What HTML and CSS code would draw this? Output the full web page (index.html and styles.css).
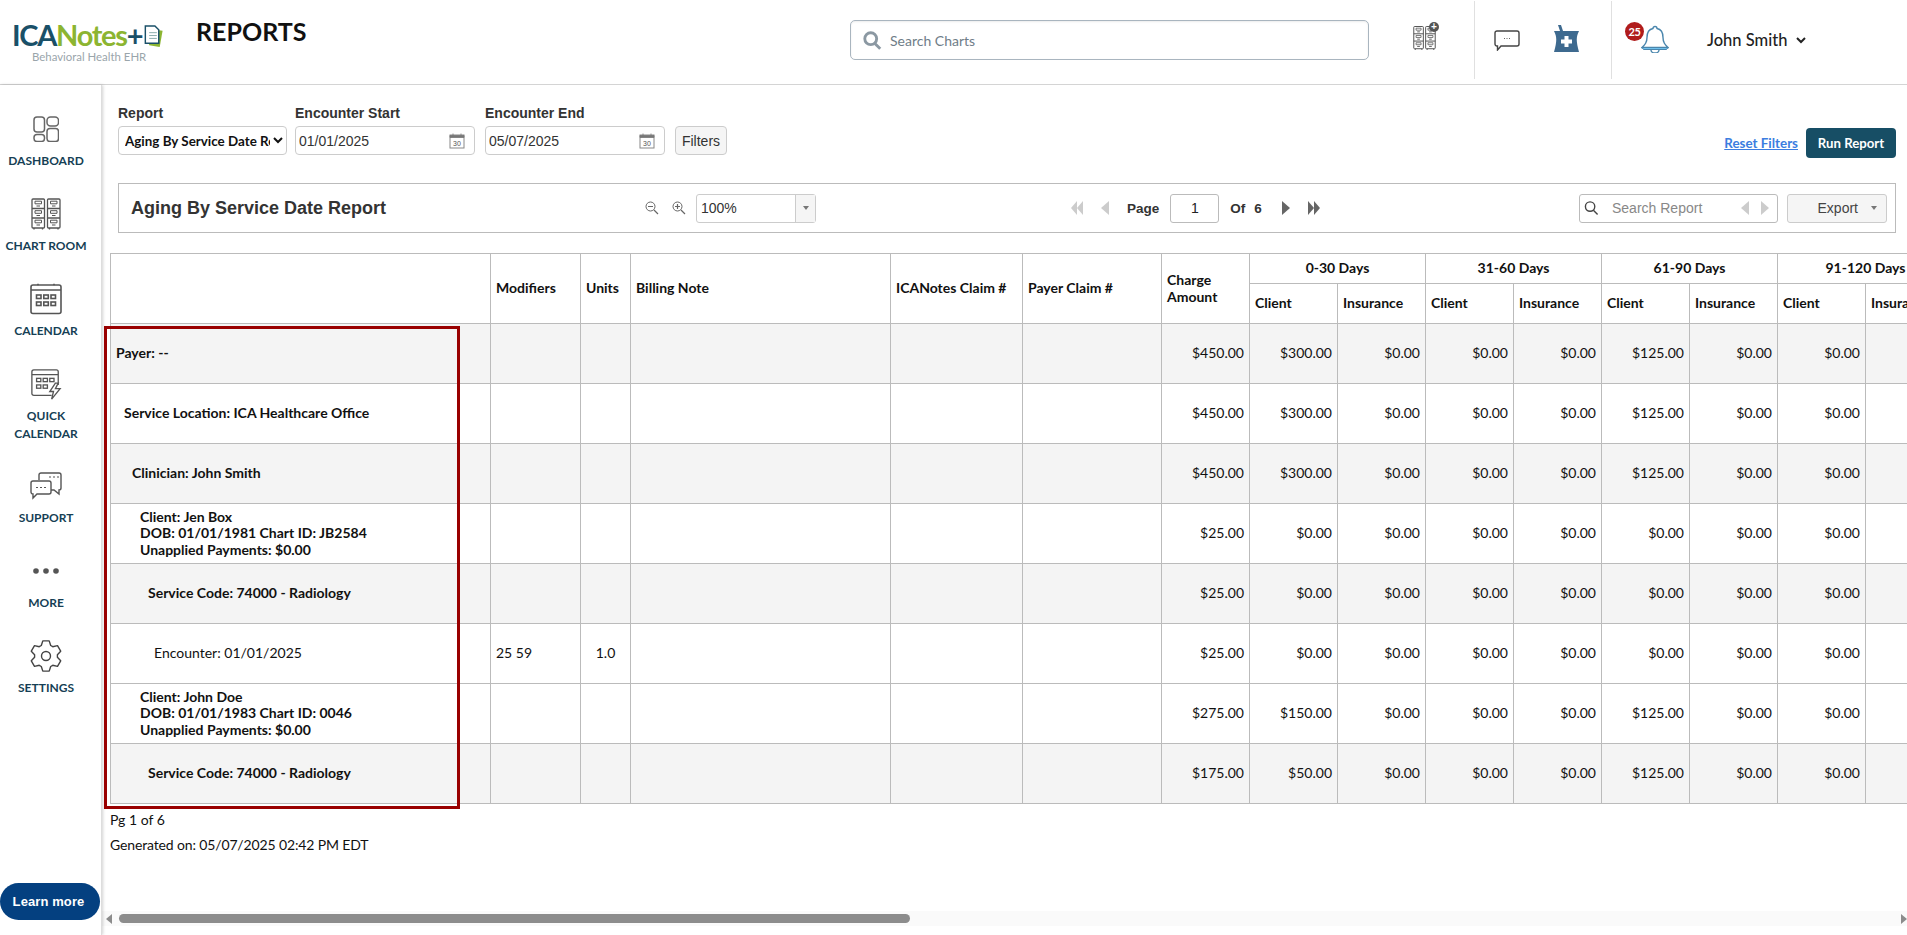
FILE: index.html
```html
<!DOCTYPE html>
<html lang="en">
<head>
<meta charset="utf-8">
<title>ICANotes Reports</title>
<link rel="stylesheet" href="styles.css">
</head>
<body>
<svg class="defs" width="0" height="0" aria-hidden="true">
  <symbol id="cabinet" viewBox="0 0 30 32">
    <g fill="none" stroke="currentColor" stroke-width="1.300">
      <rect x="1" y="1" width="12.500" height="29" rx="1"/><rect x="16.500" y="1" width="12.500" height="29" rx="1"/>
      <path d="M1 10.500h12.500M1 20h12.500M16.500 10.500H29M16.500 20H29M3 30v1.500M11.500 30v1.500M18.500 30v1.500M27 30v1.500"/>
      <path stroke-width="1" d="M4 3.200h6.500v2.600H4zM4 12.700h6.500v2.600H4zM4 22.200h6.500v2.600H4zM19.500 3.200H26v2.600h-6.500zM19.500 12.700H26v2.600h-6.500zM19.500 22.200H26v2.600h-6.500z"/>
      <path stroke-width="1.200" d="M5.500 8h3.500M5.500 17.500h3.500M5.500 27h3.500M21 8h3.500M21 17.500h3.500M21 27h3.500"/>
    </g>
  </symbol>
  <symbol id="cal" viewBox="0 0 32 32">
    <g fill="none" stroke="currentColor" stroke-width="1.600">
      <rect x="1" y="2" width="30" height="28.500" rx="2"/><path d="M1 7h30M8 .8v1.500M24 .8v1.500"/>
      <rect x="6.500" y="12" width="4.500" height="3.500"/><rect x="13.800" y="12" width="4.500" height="3.500"/><rect x="21" y="12" width="4.500" height="3.500"/>
      <rect x="6.500" y="19" width="4.500" height="3.500"/><rect x="13.800" y="19" width="4.500" height="3.500"/><rect x="21" y="19" width="4.500" height="3.500"/>
    </g>
  </symbol>
  <symbol id="mag" viewBox="0 0 16 16">
    <circle cx="6.500" cy="6.500" r="5" fill="none" stroke="currentColor"/>
    <path d="M10 10.500l4.500 4.500" stroke="currentColor" fill="none"/>
  </symbol>
  <symbol id="datecal" viewBox="0 0 16 16">
    <rect x="1" y="2" width="14" height="13" fill="#fff" stroke="#888"/>
    <path d="M1 2.500h14v2H1zM4 .5v3M12 .5v3" fill="#777" stroke="#777" stroke-width=".8"/>
    <text x="8" y="12.500" class="date-glyph">30</text>
  </symbol>
</svg>

<header class="topbar">
  <div class="logo">
    <div class="logo-word"><span class="logo-ica">ICA</span><span class="logo-notes">Notes</span><span class="logo-ica">+</span>
      <svg class="logo-doc" viewBox="0 0 20 24"><path d="M5 4l15 2-3 17-11-2" fill="#8cb531"/><path d="M2 1h10l4 4v14H2z" fill="#fff" stroke="#1a5068" stroke-width="1.500"/><path d="M6 8h8M6 11h8M6 14h8" stroke="#8aa" stroke-width="1"/></svg>
    </div>
    <div class="logo-sub">Behavioral Health EHR</div>
  </div>
  <h1 class="page-title">REPORTS</h1>
  <div class="chart-search">
    <svg class="chart-search-icon"><use href="#mag"/></svg>
    <span>Search Charts</span>
  </div>
  <div class="top-group top-group-charts">
    <div class="cabinet-plus">
      <svg class="cabinet-small"><use href="#cabinet"/></svg>
      <span class="plus-dot">+</span>
    </div>
  </div>
  <div class="top-group top-group-tools">
    <svg class="chat-icon" viewBox="0 0 26 21"><path d="M3 1h20a2 2 0 0 1 2 2v11a2 2 0 0 1-2 2H7l-3.500 4V16H3a2 2 0 0 1-2-2V3a2 2 0 0 1 2-2z" fill="#fff" stroke="#444" stroke-width="1.400"/><path d="M10 8.500h1M12.500 8.500h1M15 8.500h1" stroke="#666" stroke-width="1"/></svg>
    <svg class="mortar-icon" viewBox="0 0 27 28"><path d="M5 0h3l2 6H7z" fill="#3e6a8f"/><path d="M1 6h25c-3 6-3 10 0 21H1c3-11 3-15 0-21z" fill="#3e6a8f"/><path d="M11.500 11h4v3.500H19v4h-3.500V22h-4v-3.500H8v-4h3.500z" fill="#fff"/></svg>
  </div>
  <div class="user-group">
    <div class="bell-wrap">
      <svg class="bell-icon" viewBox="0 0 28 28"><path d="M14 1.500a2 2 0 0 1 2 2c5 1 6 5 6 9 0 5 2 7 5 10H1c3-3 5-5 5-10 0-4 1-8 6-9a2 2 0 0 1 2-2z" fill="#fff" stroke="#4a86ad" stroke-width="1.400"/><path d="M1 22.500h26l-1.500 2h-23z" fill="#6fc0ec" stroke="#4a86ad"/><path d="M10 25a4 3 0 0 0 8 0" fill="none" stroke="#4a86ad" stroke-width="1.400"/></svg>
      <span class="bell-badge">25</span>
    </div>
    <span class="user-name">John Smith</span>
    <svg class="user-caret" viewBox="0 0 10 7"><path d="M1 1l4 4 4-4" fill="none" stroke="#222" stroke-width="2"/></svg>
  </div>
</header>

<div class="shell">
  <nav class="sidebar">
    <a class="nav-item">
      <svg class="nav-icon icon-dash" viewBox="0 0 26 26"><g fill="none" stroke="#666" stroke-width="1.500"><rect x="1" y="1" width="10.500" height="15" rx="3"/><rect x="14" y="1" width="11.500" height="9" rx="3.500"/><rect x="1" y="18.500" width="10.500" height="7" rx="3"/><rect x="14" y="12.500" width="11.500" height="13" rx="3"/></g></svg>
      <span>DASHBOARD</span>
    </a>
    <a class="nav-item">
      <svg class="nav-icon icon-chart"><use href="#cabinet"/></svg>
      <span>CHART ROOM</span>
    </a>
    <a class="nav-item">
      <svg class="nav-icon icon-chart"><use href="#cal"/></svg>
      <span>CALENDAR</span>
    </a>
    <a class="nav-item">
      <svg class="nav-icon icon-chart" viewBox="0 0 32 34"><g fill="none" stroke="#555" stroke-width="1.400"><path d="M22 29H3a2 2 0 0 1-2-2V4a2 2 0 0 1 2-2h24a2 2 0 0 1 2 2v14M1 7h28"/><rect x="6" y="11" width="4.500" height="3.500"/><rect x="13" y="11" width="4.500" height="3.500"/><rect x="20" y="11" width="4.500" height="3.500"/><rect x="6" y="18" width="4.500" height="3.500"/><rect x="13" y="18" width="4.500" height="3.500"/><path d="M26 16l-6 9h4l-2 8 9-11h-5l3-6z" fill="#fff"/></g></svg>
      <span>QUICK<br>CALENDAR</span>
    </a>
    <a class="nav-item">
      <svg class="nav-icon icon-chart" viewBox="0 0 32 28"><g fill="none" stroke="#555" stroke-width="1.400"><path d="M9 8V3a2 2 0 0 1 2-2h18a2 2 0 0 1 2 2v13a2 2 0 0 1-2 2v4l-5-4h-4"/><path d="M3 9h16a2 2 0 0 1 2 2v9a2 2 0 0 1-2 2H7l-4 4v-4a2 2 0 0 1-2-2v-9a2 2 0 0 1 2-2z" fill="#fff"/><path d="M6 15.500h2M10 15.500h2M14 15.500h2M19 5h2M23 5h2M27 5h2" stroke-width="1.200"/></g></svg>
      <span>SUPPORT</span>
    </a>
    <a class="nav-item">
      <svg class="nav-icon icon-more" viewBox="0 0 26 6"><circle cx="3" cy="3" r="2.800" fill="#555"/><circle cx="13" cy="3" r="2.800" fill="#555"/><circle cx="23" cy="3" r="2.800" fill="#555"/></svg>
      <span>MORE</span>
    </a>
    <a class="nav-item">
      <svg class="nav-icon icon-chart" viewBox="0 0 32 32"><g fill="none" stroke="#444" stroke-width="1.400" stroke-linejoin="round"><path d="M11.300 5.500L12.800.84H19.200L20.700 5.500L22.760 6.700L27.500 5.600L30.700 11.200L27.400 14.800V17.200L30.700 20.800L27.500 26.400L22.760 25.300L20.700 26.500L19.200 31.160H12.800L11.300 26.500L9.240 25.300L4.500 26.400L1.300 20.800L4.600 17.200V14.800L1.300 11.200L4.500 5.600L9.240 6.700z"/><circle cx="16" cy="16" r="4.500"/></g></svg>
      <span>SETTINGS</span>
    </a>
    <button class="learn-more">Learn more</button>
  </nav>

  <main class="content">
    <form class="filters">
      <label class="field">
        <span class="field-label">Report</span>
        <select class="report-select"><option>Aging By Service Date Report</option></select>
      </label>
      <label class="field">
        <span class="field-label">Encounter Start</span>
        <span class="date-box"><input class="date-input" value="01/01/2025"><svg class="date-icon"><use href="#datecal"/></svg></span>
      </label>
      <label class="field">
        <span class="field-label">Encounter End</span>
        <span class="date-box"><input class="date-input" value="05/07/2025"><svg class="date-icon"><use href="#datecal"/></svg></span>
      </label>
      <button type="button" class="filters-btn">Filters</button>
      <div class="run-actions">
        <a class="reset-link">Reset Filters</a>
        <button type="button" class="run-btn">Run Report</button>
      </div>
    </form>

    <section class="toolbar">
      <h2 class="report-title">Aging By Service Date Report</h2>
      <div class="zoom-tools">
        <svg class="zoom-icon" viewBox="0 0 14 14"><circle cx="5.500" cy="5.500" r="4.500" fill="none" stroke="#666"/><path d="M3 5.500h5M9 9l4 4" stroke="#666" stroke-width="1.200"/></svg>
        <svg class="zoom-icon" viewBox="0 0 14 14"><circle cx="5.500" cy="5.500" r="4.500" fill="none" stroke="#666"/><path d="M3 5.500h5M5.500 3v5M9 9l4 4" stroke="#666" stroke-width="1.200"/></svg>
        <div class="zoom-combo"><span class="zoom-value">100%</span><span class="zoom-drop"><i class="caret-down"></i></span></div>
      </div>
      <div class="pager">
        <i class="tri-left tri-off"></i><i class="tri-left tri-off"></i>
        <i class="tri-left tri-off tri-prev"></i>
        <span class="pager-label">Page</span>
        <span class="pager-input">1</span>
        <span class="pager-label">Of</span>
        <span class="pager-label pager-count">6</span>
        <i class="tri-right tri-next"></i>
        <i class="tri-right tri-last"></i><i class="tri-right"></i>
      </div>
      <div class="report-search">
        <svg class="report-search-icon"><use href="#mag"/></svg>
        <span class="report-search-text">Search Report</span>
        <i class="tri-left tri-small"></i>
        <i class="tri-right tri-small tri-off-right"></i>
      </div>
      <div class="export-btn"><span>Export</span><i class="caret-down"></i></div>
    </section>

    <section class="report">
      <table class="grid">
        <colgroup>
          <col class="c380"><col class="c90"><col class="c50"><col class="c260"><col class="c132"><col class="c139"><col class="c88">
          <col class="c88"><col class="c88"><col class="c88"><col class="c88"><col class="c88"><col class="c88"><col class="c88"><col class="c88">
        </colgroup>
        <thead>
          <tr class="head-top">
            <th rowspan="2"></th><th rowspan="2">Modifiers</th><th rowspan="2">Units</th><th rowspan="2">Billing Note</th><th rowspan="2">ICANotes Claim #</th><th rowspan="2">Payer Claim #</th><th rowspan="2">Charge Amount</th>
            <th colspan="2" class="band">0-30 Days</th><th colspan="2" class="band">31-60 Days</th><th colspan="2" class="band">61-90 Days</th><th colspan="2" class="band">91-120 Days</th>
          </tr>
          <tr class="head-sub">
            <th>Client</th><th>Insurance</th><th>Client</th><th>Insurance</th><th>Client</th><th>Insurance</th><th>Client</th><th>Insurance</th>
          </tr>
        </thead>
        <tbody>
          <tr class="shade"><td class="lbl lv0">Payer: --</td><td></td><td></td><td></td><td></td><td></td><td class="num">$450.00</td><td class="num">$300.00</td><td class="num">$0.00</td><td class="num">$0.00</td><td class="num">$0.00</td><td class="num">$125.00</td><td class="num">$0.00</td><td class="num">$0.00</td><td class="num">$0.00</td></tr>
          <tr><td class="lbl lv1">Service Location: ICA Healthcare Office</td><td></td><td></td><td></td><td></td><td></td><td class="num">$450.00</td><td class="num">$300.00</td><td class="num">$0.00</td><td class="num">$0.00</td><td class="num">$0.00</td><td class="num">$125.00</td><td class="num">$0.00</td><td class="num">$0.00</td><td class="num">$0.00</td></tr>
          <tr class="shade"><td class="lbl lv2">Clinician: John Smith</td><td></td><td></td><td></td><td></td><td></td><td class="num">$450.00</td><td class="num">$300.00</td><td class="num">$0.00</td><td class="num">$0.00</td><td class="num">$0.00</td><td class="num">$125.00</td><td class="num">$0.00</td><td class="num">$0.00</td><td class="num">$0.00</td></tr>
          <tr><td class="lbl lv3">Client: Jen Box<br>DOB: 01/01/1981 Chart ID: JB2584<br>Unapplied Payments: $0.00</td><td></td><td></td><td></td><td></td><td></td><td class="num">$25.00</td><td class="num">$0.00</td><td class="num">$0.00</td><td class="num">$0.00</td><td class="num">$0.00</td><td class="num">$0.00</td><td class="num">$0.00</td><td class="num">$0.00</td><td class="num">$0.00</td></tr>
          <tr class="shade"><td class="lbl lv4">Service Code: 74000 - Radiology</td><td></td><td></td><td></td><td></td><td></td><td class="num">$25.00</td><td class="num">$0.00</td><td class="num">$0.00</td><td class="num">$0.00</td><td class="num">$0.00</td><td class="num">$0.00</td><td class="num">$0.00</td><td class="num">$0.00</td><td class="num">$0.00</td></tr>
          <tr><td class="lv5">Encounter: 01/01/2025</td><td>25 59</td><td class="mid">1.0</td><td></td><td></td><td></td><td class="num">$25.00</td><td class="num">$0.00</td><td class="num">$0.00</td><td class="num">$0.00</td><td class="num">$0.00</td><td class="num">$0.00</td><td class="num">$0.00</td><td class="num">$0.00</td><td class="num">$0.00</td></tr>
          <tr><td class="lbl lv3">Client: John Doe<br>DOB: 01/01/1983 Chart ID: 0046<br>Unapplied Payments: $0.00</td><td></td><td></td><td></td><td></td><td></td><td class="num">$275.00</td><td class="num">$150.00</td><td class="num">$0.00</td><td class="num">$0.00</td><td class="num">$0.00</td><td class="num">$125.00</td><td class="num">$0.00</td><td class="num">$0.00</td><td class="num">$0.00</td></tr>
          <tr class="shade"><td class="lbl lv4">Service Code: 74000 - Radiology</td><td></td><td></td><td></td><td></td><td></td><td class="num">$175.00</td><td class="num">$50.00</td><td class="num">$0.00</td><td class="num">$0.00</td><td class="num">$0.00</td><td class="num">$125.00</td><td class="num">$0.00</td><td class="num">$0.00</td><td class="num">$0.00</td></tr>
        </tbody>
      </table>
      <div class="callout"></div>
      <p class="foot-line foot-page">Pg 1 of 6</p>
      <p class="foot-line foot-gen">Generated on: 05/07/2025 02:42 PM EDT</p>
    </section>

    <div class="hscroll">
      <i class="tri-left tri-scroll"></i>
      <div class="hscroll-track"><div class="hscroll-thumb"></div></div>
      <i class="tri-right tri-scroll"></i>
    </div>
  </main>
</div>
</body>
</html>
```
FILE: styles.css
```css
* { box-sizing: border-box; }
html, body { height: 100%; margin: 0; }
body {
  display: flex;
  flex-direction: column;
  overflow: hidden;
  background: #fff;
  font-family: Lato, "Liberation Sans", sans-serif;
  color: #111;
}
.defs { position: absolute; }
.date-glyph { font: 7px "Liberation Sans", sans-serif; fill: #555; text-anchor: middle; }

/* top bar */
.topbar {
  display: flex;
  align-items: stretch;
  height: 85px;
  flex: none;
  border-bottom: 1px solid #d4d4d4;
}
.logo { width: 196px; padding: 22px 0 0 12px; flex: none; }
.logo-word {
  display: flex;
  align-items: flex-start;
  font-size: 29px;
  font-weight: 700;
  line-height: 26px;
  letter-spacing: -1.300px;
}
.logo-ica { color: #1a5068; }
.logo-notes { color: #8cb531; }
.logo-doc { width: 20px; height: 23px; margin: 3px 0 0 1px; flex: none; }
.logo-sub { margin: 2px 0 0 20px; font-size: 11.400px; line-height: 13px; color: #9aa5ab; }
.page-title {
  width: 654px;
  flex: none;
  margin: 0;
  padding-top: 16px;
  font-size: 25px;
  line-height: 30px;
  font-weight: 700;
  color: #111;
}
.chart-search {
  display: flex;
  align-items: center;
  gap: 8px;
  width: 519px;
  height: 40px;
  margin-top: 20px;
  padding-left: 12px;
  flex: none;
  border: 1px solid #a9b5bf;
  border-radius: 5px;
  box-shadow: inset 0 1px 2px rgba(0,0,0,.08);
  font-size: 14px;
  color: #6f7d88;
}
.chart-search-icon { width: 19px; height: 19px; color: #8b98a2; stroke-width: 2.400; }
.top-group {
  display: flex;
  height: 78px;
  margin-top: 1px;
  flex: none;
}
.top-group-charts { width: 106px; padding: 21px 0 0 44px; border-right: 1px solid #e0e0e0; }
.cabinet-plus { position: relative; width: 26px; height: 28px; }
.cabinet-small { width: 23px; height: 26px; margin-top: 3px; color: #555; display: block; }
.plus-dot {
  position: absolute;
  right: 0;
  top: 0;
  width: 10px;
  height: 10px;
  border-radius: 50%;
  background: #555;
  color: #fff;
  font: 700 10px/10px "Liberation Sans", sans-serif;
  text-align: center;
}
.top-group-tools { width: 137px; padding: 24px 0 0 19px; gap: 33px; border-right: 1px solid #e0e0e0; }
.chat-icon { width: 26px; height: 21px; margin-top: 5px; flex: none; }
.mortar-icon { width: 27px; height: 28px; flex: none; }
.user-group { display: flex; align-items: flex-start; flex: none; padding: 0 0 0 13px; }
.bell-wrap { position: relative; width: 44px; height: 40px; margin: 22px 38px 0 0; flex: none; }
.bell-icon { position: absolute; left: 16px; top: 3px; width: 28px; height: 28px; }
.bell-badge {
  position: absolute;
  left: 0;
  top: 0;
  width: 19px;
  height: 19px;
  border-radius: 50%;
  background: #b01c1c;
  color: #fff;
  font-size: 11px;
  font-weight: 700;
  line-height: 19px;
  text-align: center;
  letter-spacing: -.3px;
}
.user-name { margin: 30px 9px 0 0; font-size: 16.500px; line-height: 20px; font-weight: 500; color: #222; }
.user-caret { width: 10px; height: 7px; margin-top: 37px; }

/* shell */
.shell { display: flex; flex: 1; min-height: 0; }
.sidebar {
  position: relative;
  display: flex;
  flex-direction: column;
  align-items: center;
  width: 102px;
  flex: none;
  padding: 31px 9px 0 0;
  border-right: 1px solid #ddd;
  box-shadow: 1px 0 3px rgba(0,0,0,.18);
}
.nav-item {
  display: flex;
  flex-direction: column;
  align-items: center;
  justify-content: flex-end;
  width: 100%;
  height: 54px;
  margin-bottom: 31px;
  font-size: 12px;
  font-weight: 700;
  line-height: 18px;
  text-align: center;
  white-space: nowrap;
  color: #163f55;
  flex: none;
}
.nav-item:nth-child(4) { height: 72px; margin-bottom: 30px; }
.nav-icon { display: block; flex: none; }
.icon-dash { width: 26px; height: 26px; margin-bottom: 10px; }
.icon-chart { width: 32px; height: 32px; margin-bottom: 7px; color: #555; }
.icon-more { width: 26px; height: 6px; margin-bottom: 20px; }
.learn-more {
  position: absolute;
  left: 0;
  top: 798px;
  width: 100px;
  height: 37px;
  padding: 0 3px 0 0;
  border: 0;
  border-radius: 19px;
  background: #044080;
  color: #fff;
  font: 700 13px "Liberation Sans", sans-serif;
  letter-spacing: .1px;
}

/* content */
.content { display: flex; flex-direction: column; flex: 1; min-width: 0; }
.filters {
  display: flex;
  align-items: flex-start;
  gap: 8px;
  margin: 20px 11px 0 16px;
  height: 53px;
}
.field { display: flex; flex-direction: column; gap: 5px; flex: none; }
.field-label { font: 700 14px/16px "Liberation Sans", sans-serif; color: #333; }
.report-select {
  width: 169px;
  height: 29px;
  padding: 0 0 0 2px;
  border: 1px solid #ccc;
  border-radius: 4px;
  background: #fff;
  font: 700 13.400px Lato, sans-serif;
  color: #111;
}
.date-box {
  display: flex;
  align-items: center;
  width: 180px;
  height: 29px;
  padding: 0 9px 0 3px;
  border: 1px solid #ccc;
  border-radius: 4px;
}
.field + .field + .field { margin-left: 2px; }
.date-input {
  flex: 1;
  min-width: 0;
  padding: 0;
  border: 0;
  outline: 0;
  font: 14px "Liberation Sans", sans-serif;
  color: #333;
}
.date-icon { width: 16px; height: 16px; flex: none; }
.filters-btn {
  height: 29px;
  width: 52px;
  margin: 21px 0 0 2px;
  padding: 0;
  border: 1px solid #ccc;
  border-radius: 4px;
  background: #f5f5f5;
  font: 14px "Liberation Sans", sans-serif;
  color: #333;
}
.run-actions { display: flex; align-items: center; gap: 8px; margin: 23px 0 0 auto; }
.reset-link { font-size: 13.400px; font-weight: 700; color: #3b7de0; text-decoration: underline; }
.run-btn {
  width: 90px;
  height: 30px;
  padding: 0;
  border: 0;
  border-radius: 4px;
  background: #174e65;
  color: #fff;
  font: 700 13.200px Lato, sans-serif;
}

/* toolbar */
.toolbar {
  display: flex;
  align-items: center;
  height: 50px;
  margin: 25px 11px 0 16px;
  padding: 0 8px 0 12px;
  flex: none;
  border: 1px solid #bbb;
}
.report-title { width: 514px; margin: 0; flex: none; font: 700 18px "Liberation Sans", sans-serif; color: #333; }
.zoom-tools { display: flex; align-items: center; gap: 13px; flex: none; }
.zoom-icon { width: 14px; height: 14px; flex: none; }
.zoom-combo {
  display: flex;
  width: 120px;
  height: 29px;
  margin-left: -3px;
  border: 1px solid #ccc;
  border-radius: 3px;
  font: 14px "Liberation Sans", sans-serif;
  color: #333;
}
.zoom-value { flex: 1; line-height: 26px; padding-left: 4px; }
.zoom-drop { display: flex; align-items: center; justify-content: center; width: 20px; border-left: 1px solid #ccc; background: #f5f5f5; }
.caret-down { display: block; width: 0; height: 0; border: 3px solid transparent; border-top: 4px solid #777; border-bottom: 0; }
.pager { display: flex; align-items: center; margin-left: 255px; flex: none; font: 700 13.500px "Liberation Sans", sans-serif; color: #333; }
.tri-left, .tri-right { display: block; width: 0; height: 0; border-style: solid; border-color: transparent; flex: none; }
.tri-left { border-width: 7px 6px 7px 0; border-right-color: #777; }
.tri-right { border-width: 7px 0 7px 6px; border-left-color: #666; }
.tri-off { border-right-color: #ccc; }
.tri-prev { margin-left: 18px; border-right-width: 8px; }
.pager-label { margin-left: 18px; }
.pager-input {
  width: 49px;
  height: 29px;
  margin-left: 11px;
  border: 1px solid #bbb;
  border-radius: 3px;
  font-size: 14px;
  font-weight: 400;
  line-height: 27px;
  text-align: center;
  color: #222;
}
.pager-input + .pager-label { margin-left: 11px; }
.pager-label.pager-count { margin-left: 9px; }
.tri-next { margin-left: 20px; border-left-width: 8px; }
.tri-last { margin-left: 18px; }
.report-search {
  display: flex;
  align-items: center;
  width: 199px;
  height: 29px;
  margin-left: auto;
  padding-left: 4px;
  flex: none;
  border: 1px solid #bbb;
  border-radius: 3px;
  font: 14px "Liberation Sans", sans-serif;
  color: #888;
}
.report-search-icon { width: 15px; height: 16px; color: #444; flex: none; stroke-width: 1.500; }
.report-search-text { width: 129px; margin-left: 13px; flex: none; }
.tri-small { border-width: 7px 8px 7px 0; border-right-color: #ccc; }
.tri-off-right { margin-left: 12px; border-width: 7px 0 7px 8px; border-left-color: #ccc; }
.export-btn {
  display: flex;
  align-items: center;
  justify-content: flex-end;
  gap: 13px;
  width: 100px;
  height: 29px;
  margin-left: 9px;
  padding-right: 9px;
  flex: none;
  border: 1px solid #ccc;
  border-radius: 3px;
  background: #f5f5f5;
  font: 14px "Liberation Sans", sans-serif;
  color: #444;
}

/* report table */
.report { position: relative; margin-top: 20px; padding-left: 8px; overflow: hidden; flex: none; }
.grid { table-layout: fixed; border-collapse: collapse; width: 1843px; font-size: 14px; line-height: 16.500px; }
.grid th, .grid td { padding: 0 5px; border: 1px solid #bbb; }
.grid th { font-weight: 700; text-align: left; }
.grid .band { text-align: center; }
.grid td { vertical-align: middle; }
.c380 { width: 380px; } .c90 { width: 90px; } .c50 { width: 50px; } .c260 { width: 260px; }
.c132 { width: 132px; } .c139 { width: 139px; } .c88 { width: 88px; }
.head-top { height: 30px; }
.head-sub { height: 40px; }
.grid tbody tr { height: 60px; }
.shade td { background: #f4f4f4; }
.num { text-align: right; white-space: nowrap; }
.mid { text-align: center; }
.lbl { font-weight: 700; }
.grid .lv0 { padding-left: 5px; }
.grid .lv1 { padding-left: 13px; }
.grid .lv2 { padding-left: 21px; }
.grid .lv3 { padding-left: 29px; }
.grid .lv4 { padding-left: 37px; }
.grid .lv5 { padding-left: 43px; }
.callout { position: absolute; left: 2px; top: 73px; width: 356px; height: 483px; border: 3px solid #990000; pointer-events: none; }
.foot-line { margin: 0; font-size: 14px; line-height: 17px; color: #111; }
.foot-page { margin-top: 7px; }
.foot-gen { margin-top: 8px; letter-spacing: -.14px; }

/* scrollbar */
.hscroll {
  display: flex;
  align-items: center;
  height: 15px;
  margin: auto 0 9px;
  padding-left: 4px;
  flex: none;
  background: #fafafa;
}
.tri-scroll { border-top-width: 5px; border-bottom-width: 5px; border-right-color: #8c8c8c; border-left-color: #8c8c8c; }
.hscroll-track { flex: 1; padding-left: 7px; }
.hscroll-thumb { width: 791px; height: 9px; border-radius: 5px; background: #8c8c8c; }
```
